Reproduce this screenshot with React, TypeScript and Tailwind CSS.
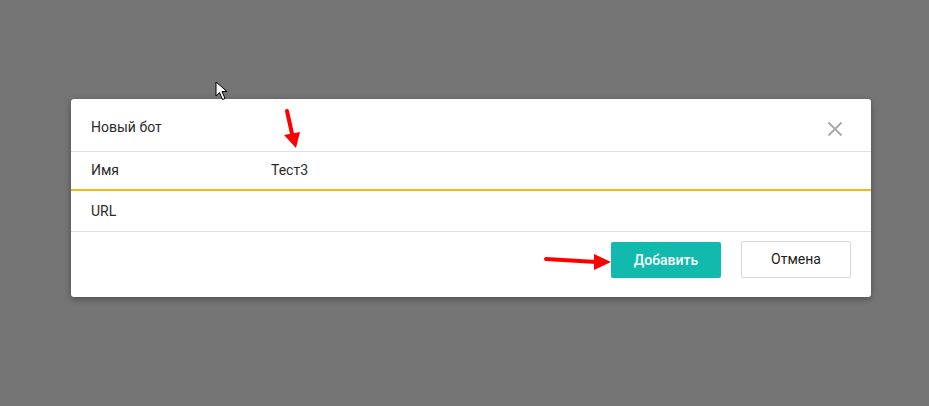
import React from "react";

export default function App() {
  return (
    <div className="relative w-[929px] h-[406px] bg-[#757575] overflow-hidden" style={{ fontFamily: "Roboto, 'Noto Sans', sans-serif" }}>
      <div className="pt-[99px] pl-[71px]">
        <div className="w-[800px] bg-white rounded-[3px] shadow-[0_2px_6px_rgba(0,0,0,0.35)] text-[14px] text-[#2b2b2b]">
          <div className="h-[53px] border-b border-[#e0e0e0] flex items-center justify-between pl-[20px] pr-[28px]">
            <span className="mt-[4px]">Новый бот</span>
            <svg width="16" height="16" viewBox="0 0 16 16" className="mt-[8px]">
              <path d="M1.5 1.5 L14.5 14.5 M14.5 1.5 L1.5 14.5" stroke="#a8a8a8" strokeWidth="1.8" />
            </svg>
          </div>
          <div className="h-[39px] border-b-2 border-[#f2bd0a] flex items-center pl-[20px]">
            <span className="w-[180px]">Имя</span>
            <span>Тест3</span>
          </div>
          <div className="h-[41px] border-b border-[#e0e0e0] flex items-center pl-[20px]">
            <span>URL</span>
          </div>
          <div className="h-[65px] flex justify-end items-start gap-[20px] pr-[20px] pt-[10px]">
            <button className="w-[110px] h-[36px] rounded-[2px] bg-[#12b9ad] text-white font-medium text-[14px]">Добавить</button>
            <button className="w-[110px] h-[37px] mt-[-1px] rounded-[2px] border border-[#d9d9d9] bg-white text-[#222] text-[14px]">Отмена</button>
          </div>
        </div>
      </div>
      <svg className="absolute left-0 top-0" width="929" height="406" viewBox="0 0 929 406">
        <path d="M287 111 L292.5 136" stroke="#ff0000" strokeWidth="4" strokeLinecap="round" />
        <polygon points="284,135 300,132 296,148" fill="#ff0000" />
        <path d="M546 259 L596 262" stroke="#ff0000" strokeWidth="4" strokeLinecap="round" />
        <polygon points="594,254 611,262 594,270" fill="#ff0000" />
        <path d="M216 82 L216 96 L219.5 92.5 L222.5 99.5 L225 98.5 L222 91.5 L227 91.5 Z" fill="#ffffff" stroke="#000000" strokeWidth="1" strokeLinejoin="miter" />
      </svg>
    </div>
  );
}
